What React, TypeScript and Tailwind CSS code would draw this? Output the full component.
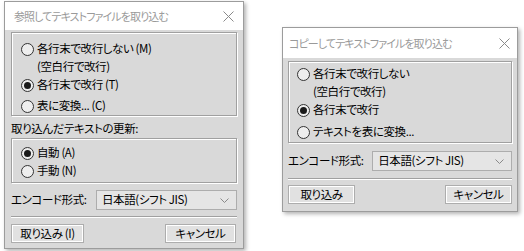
import React from "react";

const Radio = ({ checked, label, pl }: { checked?: boolean; label: React.ReactNode; pl: string }) => (
  <div className={`flex items-center h-[18px] ${pl}`}>
    <span className="w-[13px] h-[13px] shrink-0 rounded-full border border-[#333] bg-[#eeeeee] flex items-center justify-center">
      {checked && <span className="w-[7px] h-[7px] rounded-full bg-[#1a1a1a]" />}
    </span>
    <span className="ml-[3px] whitespace-nowrap">{label}</span>
  </div>
);

const CloseX = () => (
  <svg width="11" height="11" viewBox="0 0 11 11" className="shrink-0">
    <path d="M0.5 0.5 L10.5 10.5 M10.5 0.5 L0.5 10.5" stroke="#8a8a8a" strokeWidth="1" fill="none" />
  </svg>
);

const Chevron = () => (
  <svg width="9" height="5" viewBox="0 0 9 5">
    <path d="M0.5 0.5 L4.5 4.5 L8.5 0.5" stroke="#8a8a8a" strokeWidth="1" fill="none" />
  </svg>
);

const groupBox =
  "border border-[#a0a0a0] shadow-[inset_1px_1px_0_#ffffff,1px_1px_0_#ffffff]";

const EncodeRow = () => (
  <div className="flex items-center h-[20px]">
    <span className="w-[85px] whitespace-nowrap">エンコード形式:</span>
    <div className="w-[141px] h-[20px] border border-[#adadad] bg-[#e5e5e5] flex items-center justify-between pl-[5px] pr-[7px]">
      <span className="whitespace-nowrap">日本語(シフト JIS)</span>
      <Chevron />
    </div>
  </div>
);

const Separator = () => <div className="h-[2px] border-t border-[#a0a0a0] border-b border-b-white" />;

const Button = ({ children, w }: { children: React.ReactNode; w: string }) => (
  <button
    className={`${w} h-[19px] border border-[#adadad] bg-[#e1e1e1] shadow-[inset_1px_1px_0_#ffffff,inset_-1px_-1px_0_#ffffff] flex items-center justify-center leading-none`}
  >
    {children}
  </button>
);

export default function App() {
  return (
    <div className="w-[524px] h-[251px] bg-white overflow-hidden flex items-start font-['Noto_Sans_CJK_JP','Noto_Sans',sans-serif] [font-feature-settings:'palt'] text-[11.5px] tracking-[-0.4px] text-black">
      {/* 左のダイアログ */}
      <div className="ml-[4px] mt-[1px] w-[240px] h-[248px] border border-[#9c9c9c] bg-[#d9d9d9] shadow-[2px_2px_4px_rgba(0,0,0,0.3)] flex flex-col">
        <div className="h-[28px] bg-white flex items-center justify-between pl-[9px] pr-[9px]">
          <span className="text-[#9a9a9a] text-[11px] tracking-[-0.9px] whitespace-nowrap">参照してテキストファイルを取り込む</span>
          <CloseX />
        </div>
        <div className="px-[6px] flex flex-col">
          <div className={`mt-[2px] h-[84px] pt-[7px] ${groupBox}`}>
            <Radio pl="pl-[9px]" label="各行末で改行しない (M)" />
            <div className="h-[18px] flex items-center pl-[25px]">(空白行で改行)</div>
            <Radio pl="pl-[9px]" checked label="各行末で改行 (T)" />
            <div className="mt-[3px]">
              <Radio pl="pl-[9px]" label="表に変換... (C)" />
            </div>
          </div>
          <div className="mt-[4px] h-[18px] flex items-center">取り込んだテキストの更新:</div>
          <div className={`h-[45px] pt-[5px] ${groupBox}`}>
            <Radio pl="pl-[9px]" checked label="自動 (A)" />
            <Radio pl="pl-[9px]" label="手動 (N)" />
          </div>
          <div className="mt-[7px]">
            <EncodeRow />
          </div>
          <div className="mt-[6px]">
            <Separator />
          </div>
          <div className="mt-[6px] flex justify-between pr-[1px]">
            <Button w="w-[73px]">取り込み (I)</Button>
            <Button w="w-[71px]">キャンセル</Button>
          </div>
        </div>
      </div>

      {/* 右のダイアログ */}
      <div className="ml-[38px] mt-[27px] w-[236px] h-[185px] border border-[#9c9c9c] bg-[#d9d9d9] shadow-[2px_2px_4px_rgba(0,0,0,0.3)] flex flex-col">
        <div className="h-[30px] bg-white flex items-center justify-between pl-[6px] pr-[7px]">
          <span className="text-[#9a9a9a] text-[11px] tracking-[-0.9px] whitespace-nowrap">コピーしてテキストファイルを取り込む</span>
          <CloseX />
        </div>
        <div className="px-[5px] flex flex-col">
          <div className={`mt-[3px] w-[224px] h-[82px] pt-[3px] ${groupBox}`}>
            <Radio pl="pl-[8px]" label="各行末で改行しない" />
            <div className="h-[18px] flex items-center pl-[24px]">(空白行で改行)</div>
            <Radio pl="pl-[8px]" checked label="各行末で改行" />
            <div className="mt-[4px]">
              <Radio pl="pl-[8px]" label="テキストを表に変換..." />
            </div>
          </div>
          <div className="mt-[8px]">
            <EncodeRow />
          </div>
          <div className="mt-[7px] w-[224px]">
            <Separator />
          </div>
          <div className="mt-[5px] flex justify-between">
            <Button w="w-[67px]">取り込み</Button>
            <Button w="w-[67px]">キャンセル</Button>
          </div>
        </div>
      </div>
    </div>
  );
}
